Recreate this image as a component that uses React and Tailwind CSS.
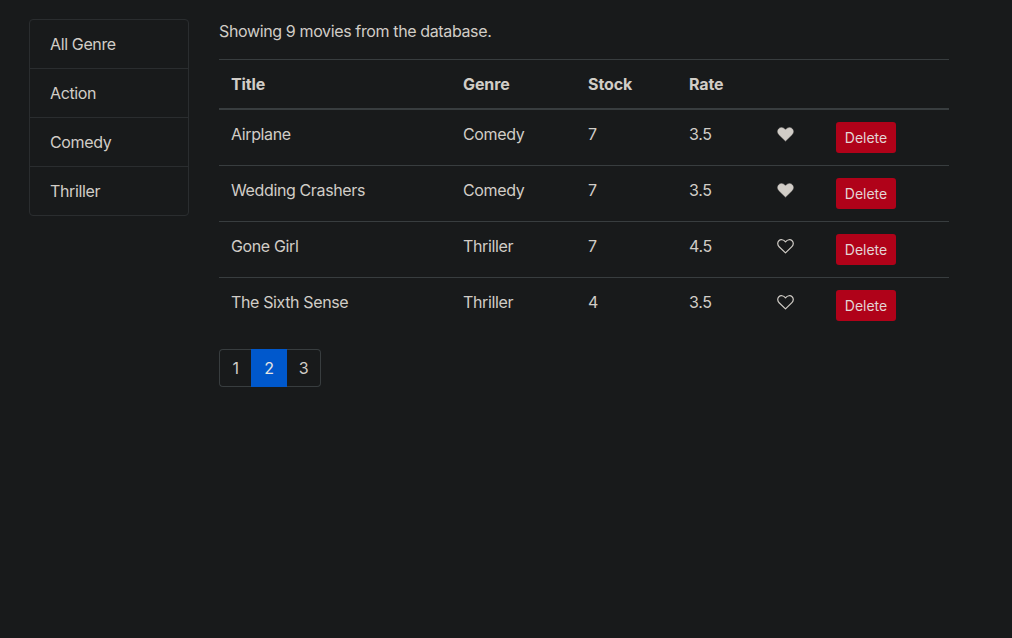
import React from "react";

const genres = ["All Genre", "Action", "Comedy", "Thriller"];
const movies = [
  { title: "Airplane", genre: "Comedy", stock: 7, rate: "3.5", liked: true },
  { title: "Wedding Crashers", genre: "Comedy", stock: 7, rate: "3.5", liked: true },
  { title: "Gone Girl", genre: "Thriller", stock: 7, rate: "4.5", liked: false },
  { title: "The Sixth Sense", genre: "Thriller", stock: 4, rate: "3.5", liked: false },
];

function Heart({ liked }) {
  return (
    <svg width="17" height="15" viewBox="0 0 17 15" className="block">
      <path
        d="M8.5 13.9 L2.1 7.7 C0.3 5.9 0.3 3.2 1.9 1.7 C3.6 0.1 6.4 0.3 8.5 2.9 C10.6 0.3 13.4 0.1 15.1 1.7 C16.7 3.2 16.7 5.9 14.9 7.7 Z"
        fill={liked ? "currentColor" : "none"}
        stroke="currentColor"
        strokeWidth={liked ? 0.6 : 1.2}
        strokeLinejoin="round"
      />
    </svg>
  );
}

export default function App() {
  return (
    <div className="min-h-[638px] bg-[#181a1b] text-[#d1cdc7] font-['Inter',sans-serif] text-base leading-6 tracking-[-0.37px] flex items-start pl-[29px] pt-[19px]">
      <ul className="w-[160px] shrink-0 border border-[#2a2d2f] rounded-[4px] overflow-hidden">
        {genres.map((g, i) => (
          <li key={g} className={`pl-5 flex items-center ${i > 0 ? "h-[49px] border-t border-[#2a2d2f]" : "h-[48px]"}`}>
            {g}
          </li>
        ))}
      </ul>
      <main className="w-[730px] ml-[30px]">
        <p className="h-[40px] leading-6">Showing 9 movies from the database.</p>
        <table className="w-[730px] table-fixed border-collapse">
          <colgroup>
            <col className="w-[232px]" />
            <col className="w-[125px]" />
            <col className="w-[101px]" />
            <col className="w-[88px]" />
            <col className="w-[59px]" />
            <col className="w-[125px]" />
          </colgroup>
          <thead>
            <tr className="h-[49px] border-t border-b-2 border-t-[#383d3f] border-b-[#383d3f] text-left tracking-[-0.1px]">
              <th className="px-3 font-bold">Title</th>
              <th className="px-3 font-bold">Genre</th>
              <th className="px-3 font-bold">Stock</th>
              <th className="px-3 font-bold">Rate</th>
              <th></th>
              <th></th>
            </tr>
          </thead>
          <tbody>
            {movies.map((m, i) => {
              const top = i === 0 ? "pt-[2px]" : "";
              return (
                <tr key={m.title} className={`${i === 0 ? "h-[57px]" : "h-[56px]"} ${i < movies.length - 1 ? "border-b border-[#383d3f]" : ""}`}>
                  <td className={`px-3 pb-[8px] ${top}`}>{m.title}</td>
                  <td className={`px-3 pb-[8px] ${top}`}>{m.genre}</td>
                  <td className={`px-3 pb-[8px] ${top}`}>{m.stock}</td>
                  <td className={`px-3 pb-[8px] ${top}`}>{m.rate}</td>
                  <td className={`px-3 pb-[7px] ${top}`}>
                    <Heart liked={m.liked} />
                  </td>
                  <td className={`px-3 ${i === 0 ? "pt-[1px]" : ""}`}>
                    <button className="block h-[31px] w-[60px] rounded-[3px] bg-[#b00219] text-[#e3d5d5] text-sm leading-5 tracking-normal">Delete</button>
                  </td>
                </tr>
              );
            })}
          </tbody>
        </table>
        <nav className="mt-[15px] flex">
          <a className="h-[38px] w-[32px] flex items-center justify-center border border-r-0 border-[#383d3f] rounded-l-[4px]">1</a>
          <a className="h-[38px] w-[36px] flex items-center justify-center bg-[#0058cc] text-[#e8e6e3]">2</a>
          <a className="h-[38px] w-[34px] flex items-center justify-center border border-l-0 border-[#383d3f] rounded-r-[4px]">3</a>
        </nav>
      </main>
    </div>
  );
}
